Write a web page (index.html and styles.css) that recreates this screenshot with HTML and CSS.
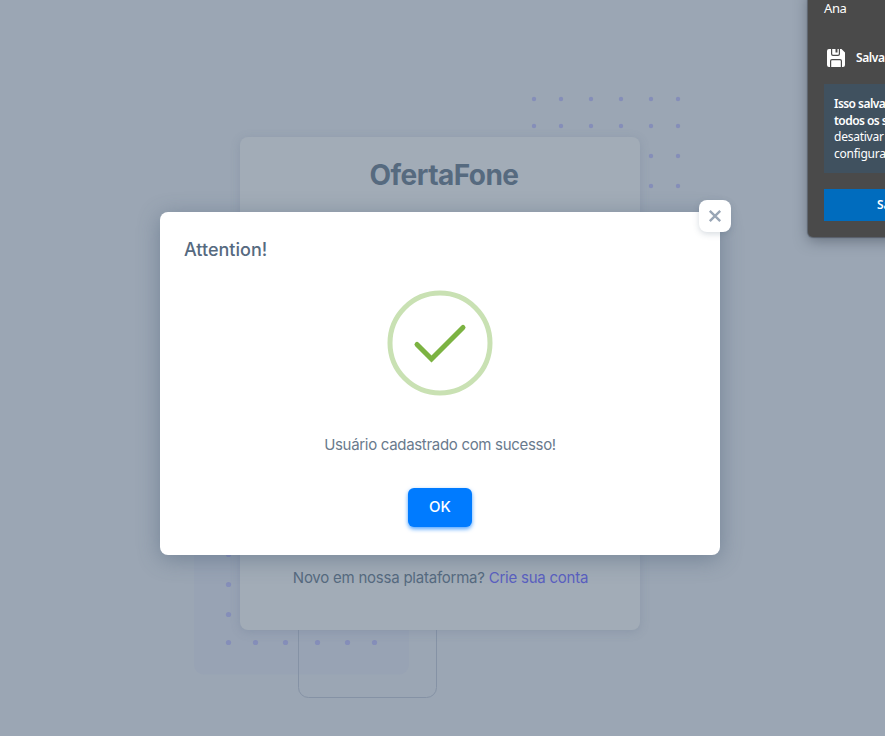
FILE: index.html
```html
<!DOCTYPE html>
<html lang="pt-BR">
<head>
<meta charset="utf-8">
<title>OfertaFone</title>
<link rel="stylesheet" href="styles.css">
</head>
<body>
<main class="page">
  <svg class="decor" width="885" height="736" viewBox="0 0 885 736" aria-hidden="true">
    <defs>
      <g id="row-top"><circle cx="534" r="2.2"/><circle cx="561" r="2.2"/><circle cx="591" r="2.2"/><circle cx="621" r="2.2"/><circle cx="651" r="2.2"/><circle cx="678" r="2.2"/></g>
      <g id="row-bottom"><circle cx="228.5" r="2.6"/><circle cx="255.5" r="2.6"/><circle cx="285.5" r="2.6"/><circle cx="317.5" r="2.6"/><circle cx="347.5" r="2.6"/><circle cx="374.5" r="2.6"/></g>
    </defs>
    <rect class="tint" x="194" y="460" width="215" height="214.500" rx="10"/>
    <rect class="outline" x="298.500" y="560.500" width="138" height="137" rx="10"/>
    <g class="dots">
      <use href="#row-top" y="99"/><use href="#row-top" y="126"/><use href="#row-top" y="156"/><use href="#row-top" y="186"/>
      <use href="#row-bottom" y="554.500"/><use href="#row-bottom" y="584.500"/><use href="#row-bottom" y="614.500"/><use href="#row-bottom" y="642.500"/>
    </g>
  </svg>
  <section class="card">
    <h1 class="brand">OfertaFone</h1>
    <p class="signup">Novo em nossa plataforma? <a class="link">Crie sua conta</a></p>
  </section>
</main>
<div class="modal" role="dialog">
  <button class="close" aria-label="Fechar">
    <svg width="14" height="14" viewBox="0 0 14 14"><path d="M1.800 1.800 12.200 12.200M12.200 1.800 1.800 12.200"/></svg>
  </button>
  <h2 class="modal-title">Attention!</h2>
  <svg class="check" width="106" height="106" viewBox="0 0 106 106">
    <circle class="ring" cx="53" cy="53" r="50"/>
    <path class="tick" d="M30 54.500 44.500 69 76 37.500"/>
  </svg>
  <p class="message">Usuário cadastrado com sucesso!</p>
  <button class="ok">OK</button>
</div>
<aside class="popup">
  <div class="popup-user">Ana</div>
  <div class="popup-save">
    <svg width="18" height="18" viewBox="0 0 18 18"><path fill="#fff" fill-rule="evenodd" d="M2 0H4V5Q4 7 6 7H11Q13 7 13 5V0H14.500L18 3.500V16Q18 18 16 18H15V12Q15 10 13 10H5Q3 10 3 12V18H2Q0 18 0 16V2Q0 0 2 0ZM5.200 0H8.500V3.500H10.500V0H11.800V5Q11.800 5.800 11 5.800H6Q5.200 5.800 5.200 5ZM4.200 18V12Q4.200 11.200 5 11.200H13Q13.800 11.200 13.800 12V18Z"/></svg>
    <span>Salvar</span>
  </div>
  <div class="popup-info"><b>Isso salva</b><b>todos os s</b><span>desativar</span><span>configura</span></div>
  <div class="popup-button">Sa</div>
</aside>
</body>
</html>
```
FILE: styles.css
```css
* { box-sizing: border-box; }
body {
  margin: 0;
  width: 885px;
  height: 736px;
  overflow: hidden;
  position: relative;
  background: #9ba6b4;
  font-family: Inter, "Liberation Sans", sans-serif;
}
h1, h2, p { margin: 0; }
button { border: 0; padding: 0; font: inherit; }
.page { height: 736px; padding: 137px 0 0 240px; }
.decor { position: absolute; top: 0; left: 0; }
.tint { fill: #98a3b4; }
.outline { fill: none; stroke: #8592a5; stroke-width: 1; }
.dots { fill: #858eb9; }
.card {
  position: relative;
  display: flex;
  flex-direction: column;
  justify-content: space-between;
  width: 400px;
  height: 493px;
  padding: 20px 0 40px;
  border-radius: 8px;
  background: #a2acb7;
  box-shadow: 0 2px 10px rgba(95, 112, 138, .25);
  color: #566a7f;
  text-align: center;
}
.brand { padding-left: 8px; font-size: 28px; line-height: 36px; font-weight: 650; letter-spacing: -.55px; }
.signup { padding-left: 1px; font-size: 15px; line-height: 24px; letter-spacing: -.23px; white-space: nowrap; }
.link { color: #5a5fc0; }
.modal {
  position: absolute;
  top: 212px;
  left: 160px;
  width: 560px;
  height: 343px;
  padding: 24px;
  display: flex;
  flex-direction: column;
  align-items: center;
  border-radius: 8px;
  background: #fff;
  box-shadow: 0 4px 22px rgba(67, 89, 113, .45);
}
.close {
  position: absolute;
  top: -12px;
  right: -11px;
  width: 32px;
  height: 32px;
  display: grid;
  place-items: center;
  border-radius: 8px;
  background: #fff;
  box-shadow: 0 2px 6px rgba(67, 89, 113, .22);
}
.close path { fill: none; stroke: #98a5b5; stroke-width: 2.4; }
.modal-title {
  align-self: flex-start;
  color: #566a7f;
  font-size: 18px;
  line-height: 28px;
  font-weight: 450;
  letter-spacing: 0;
}
.check { margin-top: 26px; fill: none; }
.ring { stroke: #c9e1b3; stroke-width: 5; }
.tick { stroke: #7cb342; stroke-width: 5; stroke-linecap: round; }
.message { margin-top: 37px; color: #697a8d; font-size: 15px; line-height: 24px; letter-spacing: -.31px; }
.ok {
  margin-top: 31px;
  width: 64px;
  height: 39px;
  padding-bottom: 2px;
  flex: none;
  border-radius: 6px;
  background: #007bff;
  box-shadow: 0 2px 4px rgba(0, 123, 255, .7);
  color: #fff;
  font-size: 15px;
  font-weight: 550;
}
.popup {
  position: absolute;
  top: -10px;
  left: 808px;
  width: 110px;
  height: 247px;
  padding: 10px 0 0 16px;
  border-radius: 5px;
  background: #4a4a4a;
  box-shadow: 0 0 1px 1px rgba(65, 70, 78, .6), 0 4px 14px rgba(55, 65, 80, .5);
  color: #fff;
  font-family: "Noto Sans", sans-serif;
  font-size: 12px;
}
.popup-user { height: 47px; line-height: 17px; font-size: 13px; letter-spacing: -.4px; }
.popup-save { height: 37px; padding: 1px 0 17px 3px; display: flex; align-items: center; gap: 11px; font-weight: 600; letter-spacing: -.4px; }
.popup-save svg { flex: none; }
.popup-info {
  height: 89px;
  padding: 12px 0 0 10px;
  display: flex;
  flex-direction: column;
  background: #40515f;
  line-height: 16.700px;
  letter-spacing: -.25px;
  white-space: nowrap;
}
.popup-info b { font-weight: 600; letter-spacing: -.55px; }
.popup-button { height: 32px; margin-top: 16px; padding-left: 53px; background: #006cbe; line-height: 31px; font-weight: 600; }
```
